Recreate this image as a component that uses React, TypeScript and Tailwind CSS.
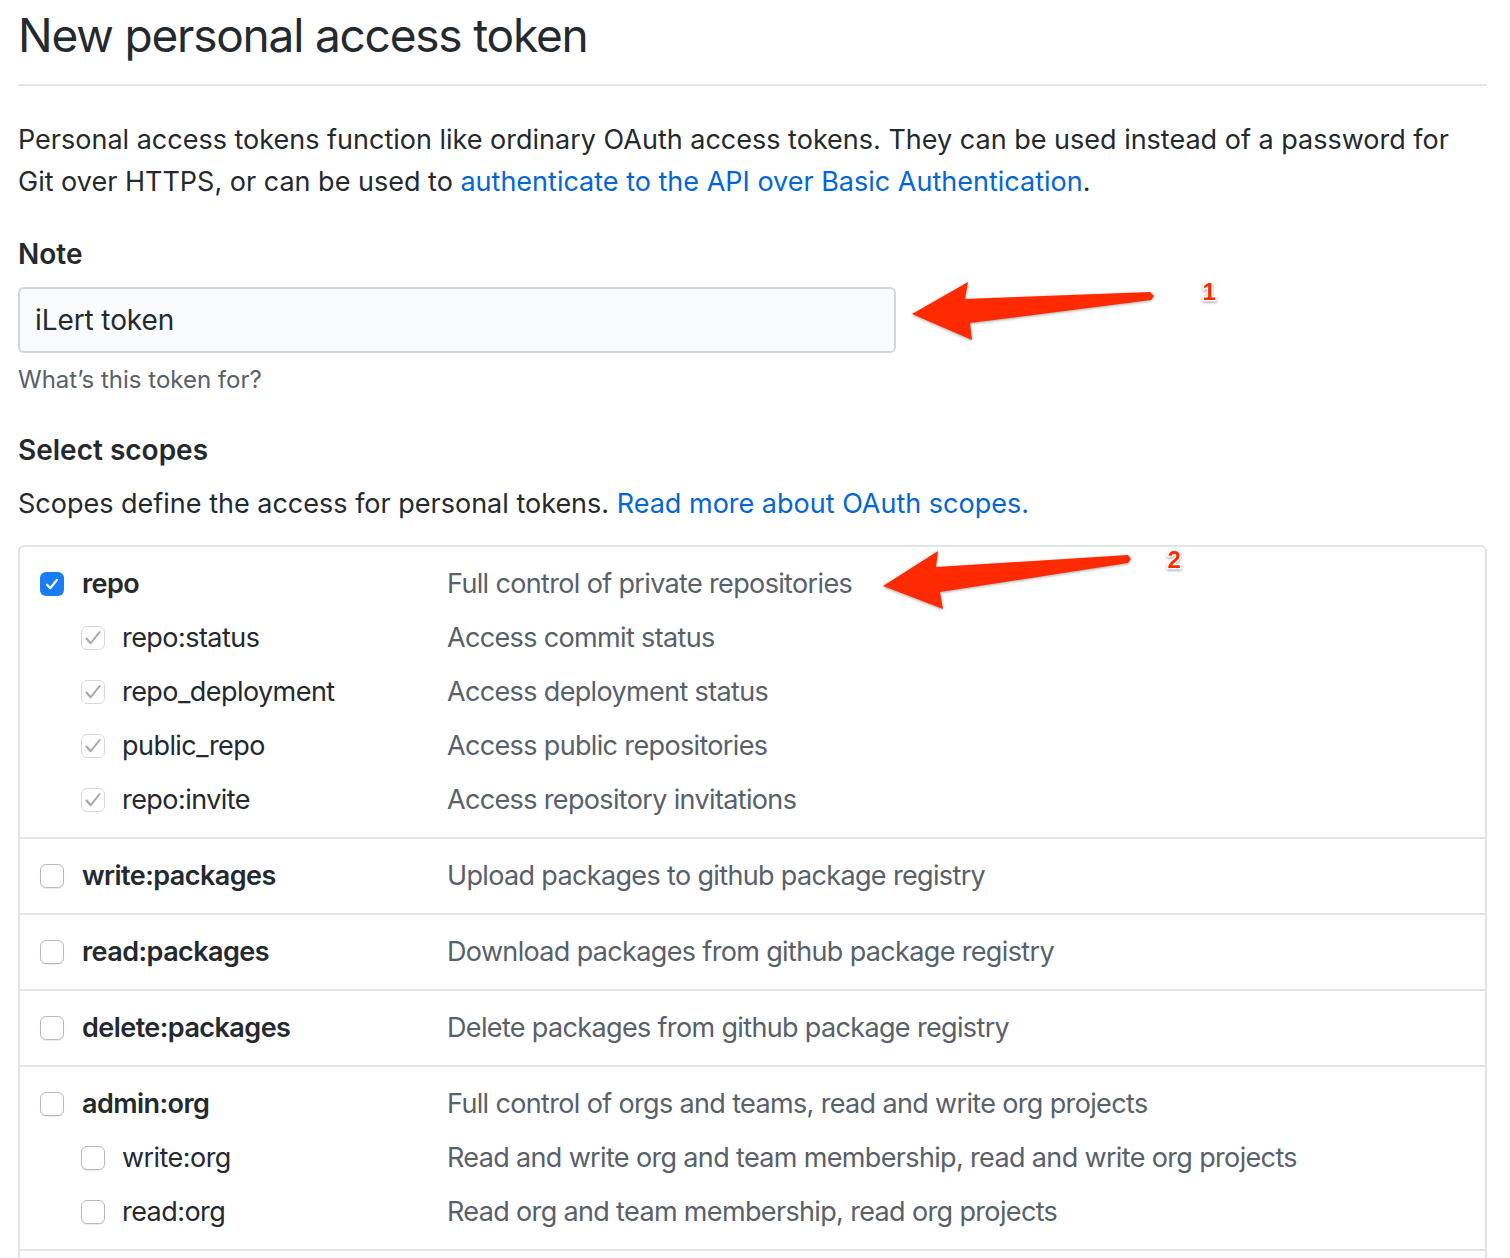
import * as React from "react";

type Scope = {
  name: string;
  description: string;
  checked?: boolean;
  children?: { name: string; description: string }[];
};

const SCOPES: Scope[] = [
  {
    name: "repo",
    description: "Full control of private repositories",
    checked: true,
    children: [
      { name: "repo:status", description: "Access commit status" },
      { name: "repo_deployment", description: "Access deployment status" },
      { name: "public_repo", description: "Access public repositories" },
      { name: "repo:invite", description: "Access repository invitations" },
    ],
  },
  {
    name: "write:packages",
    description: "Upload packages to github package registry",
  },
  {
    name: "read:packages",
    description: "Download packages from github package registry",
  },
  {
    name: "delete:packages",
    description: "Delete packages from github package registry",
  },
  {
    name: "admin:org",
    description: "Full control of orgs and teams, read and write org projects",
    children: [
      {
        name: "write:org",
        description: "Read and write org and team membership, read and write org projects",
      },
      { name: "read:org", description: "Read org and team membership, read org projects" },
    ],
  },
  {
    name: "admin:public_key",
    description: "Full control of user public keys",
  },
];

function Checkbox({ state }: { state: "on" | "off" | "inherited" }) {
  if (state === "on") {
    return (
      <span className="flex h-[24px] w-[24px] shrink-0 items-center justify-center rounded-[6px] bg-[#1a7cf4]">
        <svg width="20" height="20" viewBox="0 0 16 16" aria-hidden>
          <path
            d="M4 8.6l2.6 2.8 5.4-6.8"
            fill="none"
            stroke="#fff"
            strokeWidth="1.7"
            strokeLinecap="round"
            strokeLinejoin="round"
          />
        </svg>
      </span>
    );
  }
  if (state === "inherited") {
    return (
      <span className="flex h-[24px] w-[24px] shrink-0 items-center justify-center rounded-[6px] border border-[#d9d9d9] bg-white">
        <svg width="20" height="20" viewBox="0 0 16 16" aria-hidden>
          <path
            d="M2.8 8.4l3.3 3.8 7.2-9"
            fill="none"
            stroke="#a6a6a6"
            strokeWidth="1.6"
            strokeLinecap="round"
            strokeLinejoin="round"
          />
        </svg>
      </span>
    );
  }
  return (
    <span className="block h-[24px] w-[24px] shrink-0 rounded-[6px] border border-[#b9b9b9] bg-white shadow-[0_1px_1px_rgba(0,0,0,0.08)]" />
  );
}

function ScopeGroup({ scope, first }: { scope: Scope; first: boolean }) {
  return (
    <li
      className={[
        "list-none py-[10px] pl-[20px]",
        first ? "" : "border-t-2 border-[#e1e4e8]",
      ].join(" ")}
    >
      <div className="flex h-[54px] items-center">
        <div className="flex w-[407px] shrink-0 items-center gap-[18px]">
          <Checkbox state={scope.checked ? "on" : "off"} />
          <span className="font-semibold text-[#24292e]">{scope.name}</span>
        </div>
        <span className="tracking-[-0.65px] text-[#586069]">{scope.description}</span>
      </div>
      {scope.children?.map((c) => (
        <div key={c.name} className="flex h-[54px] items-center">
          <div className="flex w-[407px] shrink-0 items-center gap-[17px] pl-[41px]">
            <Checkbox state={scope.checked ? "inherited" : "off"} />
            <span className="text-[#24292e]">{c.name}</span>
          </div>
          <span className="tracking-[-0.65px] text-[#586069]">{c.description}</span>
        </div>
      ))}
    </li>
  );
}

// annotation arrows drawn over the form
function Arrow({ points, label, lx, ly }: { points: string; label: string; lx: number; ly: number }) {
  return (
    <>
      <polygon
        points={points}
        fill="#ff2a00"
        strokeLinejoin="round"
        style={{ filter: "drop-shadow(0 1px 1.5px rgba(0,0,0,0.35))" }}
      />
      <text
        x={lx}
        y={ly}
        fill="#ff2a00"
        stroke="#fff"
        strokeWidth="3"
        paintOrder="stroke"
        fontSize="24"
        fontWeight="800"
        fontFamily="Liberation Sans, Arial, sans-serif"
        textAnchor="middle"
        style={{ filter: "drop-shadow(0 1px 1px rgba(0,0,0,0.4))" }}
      >
        {label}
      </text>
    </>
  );
}

export default function App() {
  return (
    <div className="relative h-[1258px] w-[1510px] overflow-hidden bg-white pl-[18px] pr-[23px] font-['Inter',sans-serif] text-[27px] leading-[42px] tracking-[-0.55px] text-[#24292e]">
      <h2 className="border-b-2 border-[#e1e4e8] pb-[16px] pt-[2px] text-[46px] font-normal leading-[66px] tracking-[-1.2px]">
        New personal access token
      </h2>

      <p className="mt-[33px] tracking-[0px]">
        Personal access tokens function like ordinary OAuth access tokens. They can be used instead of a password for
        <br />
        Git over HTTPS, or can be used to{" "}
        <a className="text-[#0366d6]" href="#">
          authenticate to the API over Basic Authentication
        </a>
        .
      </p>

      <div className="mt-[30px]">
        <label className="block text-[28px] font-semibold tracking-[0px]">Note</label>
        <div className="mt-[12px] flex h-[66px] w-[878px] items-center rounded-[6px] border-2 border-[#d1d5da] bg-[#fafbfc] px-[15px] text-[28px] tracking-[-0.1px] text-[#24292e]">
          iLert token
        </div>
        <p className="mt-[9px] text-[24px] leading-[36px] tracking-normal text-[#586069]">What’s this token for?</p>
      </div>

      <h3 className="mt-[31px] text-[28px] font-semibold tracking-[0px]">Select scopes</h3>
      <p className="mt-[12px] tracking-[0px]">
        Scopes define the access for personal tokens.{" "}
        <a className="text-[#0366d6]" href="#">
          Read more about OAuth scopes.
        </a>
      </p>

      <ul className="mt-[20px] rounded-[6px] border-2 border-[#e1e4e8]">
        {SCOPES.map((s, i) => (
          <ScopeGroup key={s.name} scope={s} first={i === 0} />
        ))}
      </ul>

      <svg className="pointer-events-none absolute left-0 top-0" width="1510" height="1258" aria-hidden>
        <Arrow
          points="912,314 968,282 965,299 1150,292 1154,296 1151,300 970,323 972,340"
          label="1"
          lx={1209}
          ly={300}
        />
        <Arrow
          points="883,586 938,551 936,567 1128,555 1131,559 1128,563 940,592 943,609"
          label="2"
          lx={1174}
          ly={568}
        />
      </svg>
    </div>
  );
}
